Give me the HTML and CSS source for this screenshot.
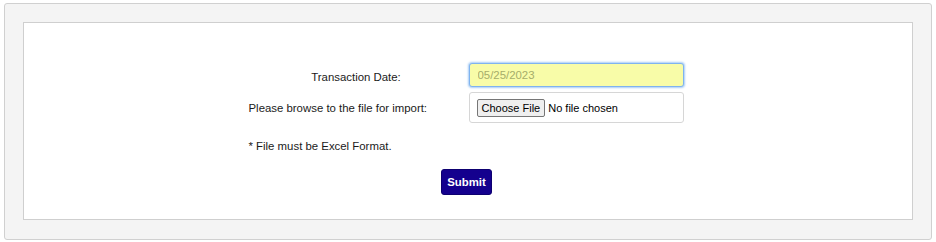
FILE: index.html
```html
<!DOCTYPE html>
<html lang="en">
<head>
    <meta charset="UTF-8">
    <title>Import Transactions</title>
    <link rel="stylesheet" href="styles.css">
</head>
<body>
    <div class="outer">
        <div class="panel">
            <form class="import-form" onsubmit="return false;">
                <table class="form-table">
                    <tr>
                        <td class="label label-center">Transaction Date:</td>
                        <td class="field field-date">
                            <input type="text" class="date-input" value="05/25/2023">
                        </td>
                    </tr>
                    <tr>
                        <td class="label">Please browse to the file for import:</td>
                        <td class="field">
                            <div class="file-box">
                                <span class="file-btn">Choose File</span>
                                <span class="file-name">No file chosen</span>
                            </div>
                        </td>
                    </tr>
                    <tr>
                        <td class="note" colspan="2">* File must be Excel Format.</td>
                    </tr>
                </table>
                <div class="actions">
                    <button type="submit" class="submit-btn">Submit</button>
                </div>
            </form>
        </div>
    </div>
</body>
</html>
```

FILE: styles.css
```css
body {
    margin: 0;
    padding: 3px 4px 0 4px;
    font-family: "Liberation Sans", Arial, sans-serif;
    font-size: 11.4px;
    color: #1a1a1a;
}

.outer {
    background-color: #f4f4f4;
    border: 1px solid #d0d0d0;
    border-radius: 3px;
    padding: 18px 18px 19px 18px;
    height: 198px;
}

.panel {
    background-color: white;
    border: 1px solid #cfcfcf;
    height: 196px;
}

.import-form {
    padding-top: 39px;
    padding-right: 4px;
}

.form-table {
    margin: 0 auto;
    border-collapse: separate;
    border-spacing: 0;
}

.form-table td {
    padding: 0;
}

.label {
    width: 215px;
    padding-right: 5px !important;
    text-align: left;
    vertical-align: middle;
}

.label-center {
    text-align: center;
}

.field-date {
    padding-top: 1px !important;
    padding-bottom: 5px !important;
}

.date-input {
    display: block;
    box-sizing: border-box;
    width: 215px;
    height: 24px;
    margin: 0;
    padding: 0 8px;
    font-family: "Liberation Sans", Arial, sans-serif;
    font-size: 11.4px;
    color: #a6ad6a;
    background-color: #f8fca8;
    border: 1px solid #7fb3ef;
    border-radius: 3px;
    box-shadow: 0 0 2px 1px #a9cdf7;
    outline: none;
}

.file-box {
    box-sizing: border-box;
    width: 215px;
    height: 31px;
    display: flex;
    align-items: center;
    padding-left: 7px;
    border: 1px solid #d6d6d6;
    border-radius: 3px;
    font-size: 11px;
}

.file-btn {
    display: inline-block;
    padding: 1px 4px;
    color: #000;
    background-color: #efefef;
    border: 1px solid #767676;
    border-radius: 2px;
    line-height: 14px;
}

.file-name {
    margin-left: 3px;
    color: #000;
}

.note {
    padding-top: 15px !important;
    height: 16px;
}

.actions {
    text-align: center;
    padding-left: 1px;
    margin-top: 15px;
}

.submit-btn {
    width: 51px;
    height: 26px;
    padding: 0;
    font-family: "Liberation Sans", Arial, sans-serif;
    font-size: 11.4px;
    font-weight: bold;
    color: white;
    background-color: #14008e;
    border: 1px solid #0d0070;
    border-radius: 3px;
    cursor: pointer;
}
```
